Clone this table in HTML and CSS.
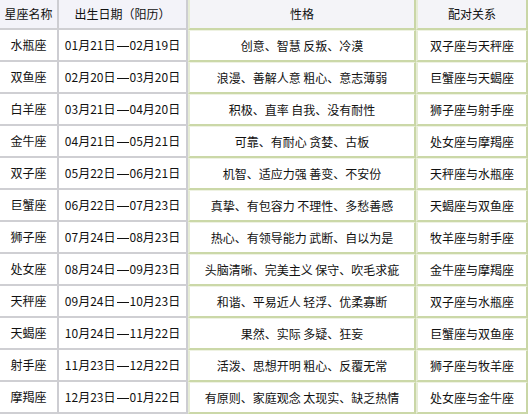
FILE: index.html
```html
<!DOCTYPE html>
<html lang="zh-CN">
<head>
<meta charset="utf-8">
<title>星座</title>
<link rel="stylesheet" href="styles.css">
</head>
<body>
<table class="stars">
  <colgroup>
    <col class="c1"><col class="c2"><col class="c3"><col class="c4">
  </colgroup>
  <thead>
    <tr>
      <th class="g">星座名称</th>
      <th class="g">出生日期（阳历）</th>
      <th class="v">性格</th>
      <th class="v">配对关系</th>
    </tr>
  </thead>
  <tbody>
    <tr><td class="g">水瓶座</td><td class="g">01月21日<span class="dash">—</span>02月19日</td><td class="v">创意、智慧 反叛、冷漠</td><td class="v">双子座与天秤座</td></tr>
    <tr><td class="g">双鱼座</td><td class="g">02月20日<span class="dash">—</span>03月20日</td><td class="v">浪漫、善解人意 粗心、意志薄弱</td><td class="v">巨蟹座与天蝎座</td></tr>
    <tr><td class="g">白羊座</td><td class="g">03月21日<span class="dash">—</span>04月20日</td><td class="v">积极、直率 自我、没有耐性</td><td class="v">狮子座与射手座</td></tr>
    <tr><td class="g">金牛座</td><td class="g">04月21日<span class="dash">—</span>05月21日</td><td class="v">可靠、有耐心 贪婪、古板</td><td class="v">处女座与摩羯座</td></tr>
    <tr><td class="g">双子座</td><td class="g">05月22日<span class="dash">—</span>06月21日</td><td class="v">机智、适应力强 善变、不安份</td><td class="v">天秤座与水瓶座</td></tr>
    <tr><td class="g">巨蟹座</td><td class="g">06月22日<span class="dash">—</span>07月23日</td><td class="v">真挚、有包容力 不理性、多愁善感</td><td class="v">天蝎座与双鱼座</td></tr>
    <tr><td class="g">狮子座</td><td class="g">07月24日<span class="dash">—</span>08月23日</td><td class="v">热心、有领导能力 武断、自以为是</td><td class="v">牧羊座与射手座</td></tr>
    <tr><td class="g">处女座</td><td class="g">08月24日<span class="dash">—</span>09月23日</td><td class="v">头脑清晰、完美主义 保守、吹毛求疵</td><td class="v">金牛座与摩羯座</td></tr>
    <tr><td class="g">天秤座</td><td class="g">09月24日<span class="dash">—</span>10月23日</td><td class="v">和谐、平易近人 轻浮、优柔寡断</td><td class="v">双子座与水瓶座</td></tr>
    <tr><td class="g">天蝎座</td><td class="g">10月24日<span class="dash">—</span>11月22日</td><td class="v">果然、实际 多疑、狂妄</td><td class="v">巨蟹座与双鱼座</td></tr>
    <tr><td class="g">射手座</td><td class="g">11月23日<span class="dash">—</span>12月22日</td><td class="v">活泼、思想开明 粗心、反覆无常</td><td class="v">狮子座与牧羊座</td></tr>
    <tr><td class="g">摩羯座</td><td class="g">12月23日<span class="dash">—</span>01月22日</td><td class="v">有原则、家庭观念 太现实、缺乏热情</td><td class="v">处女座与金牛座</td></tr>
  </tbody>
</table>
</body>
</html>
```

FILE: styles.css
```css
html, body {
  margin: 0;
  padding: 0;
  background: #ffffff;
}

.stars {
  border-collapse: separate;
  border-spacing: 0;
  table-layout: fixed;
  width: 528px;
  font-family: "Noto Sans CJK SC", "Noto Sans", sans-serif;
  font-size: 12px;
  color: #111111;
}

.c1 { width: 59px; }
.c2 { width: 129px; }
.c3 { width: 228px; }
.c4 { width: 112px; }

.stars th,
.stars td {
  box-sizing: border-box;
  height: 32px;
  padding: 0;
  text-align: center;
  vertical-align: middle;
  font-weight: normal;
  white-space: nowrap;
  line-height: 16px;
}

.stars thead th {
  height: 30px;
  background: #f3f3f9;
}

.stars .g {
  border-right: 2px solid #cdcdd2;
  border-bottom: 2px solid #cfcfd3;
}

.stars .v {
  border-left: 2px solid #e6ecd6;
  border-right: 2px solid #c9d6a6;
  border-bottom: 2px solid #cbd8a8;
  border-top: 1px solid #eef2e2;
}

.stars thead .v {
  border-top: 0;
  background: #f4f4f8;
}

.dash {
  display: inline-block;
  width: 12px;
  height: 1px;
  margin: 0 1px;
  vertical-align: middle;
  background: #111111;
  color: transparent;
  overflow: hidden;
  font-size: 1px;
  line-height: 1px;
}
```
